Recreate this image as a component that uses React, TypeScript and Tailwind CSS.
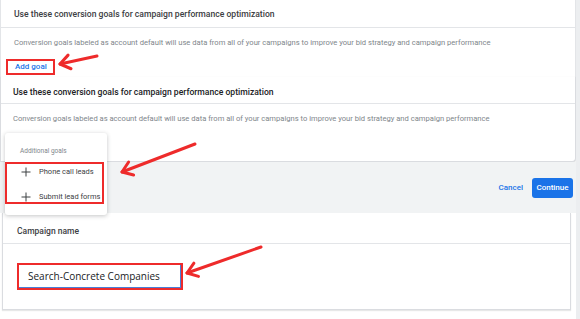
import React from 'react';

const TITLE = 'Use these conversion goals for campaign performance optimization';
const DESC =
  'Conversion goals labeled as account default will use data from all of your campaigns to improve your bid strategy and campaign performance';

function Arrow({ x1, y1, x2, y2 }: { x1: number; y1: number; x2: number; y2: number }) {
  // red annotation arrow, head at (x2, y2)
  const a = Math.atan2(y1 - y2, x1 - x2);
  const len = 12;
  const spread = 0.62;
  const h1x = x2 + len * Math.cos(a + spread);
  const h1y = y2 + len * Math.sin(a + spread);
  const h2x = x2 + len * Math.cos(a - spread);
  const h2y = y2 + len * Math.sin(a - spread);
  return (
    <g stroke="#ee2b2b" strokeWidth={3} strokeLinecap="round" strokeLinejoin="round" fill="none">
      <line x1={x1} y1={y1} x2={x2} y2={y2} />
      <polyline points={`${h1x},${h1y} ${x2},${y2} ${h2x},${h2y}`} />
    </g>
  );
}

function Plus() {
  return (
    <svg width="10" height="10" viewBox="0 0 10 10" className="shrink-0">
      <path d="M5 0.5v9M0.5 5h9" stroke="#3c4043" strokeWidth="1" />
    </svg>
  );
}

export default function App() {
  return (
    <div className="relative w-[580px] h-[319px] overflow-hidden bg-white flex font-['Roboto',sans-serif]">
      <div className="flex-1 flex flex-col min-w-0">
        {/* Goals panel 1 */}
        <section className="h-[77px] border-l border-r border-[#e3e5e8] bg-white shrink-0">
          <div className="h-[28px] flex items-end pb-[8px] pl-[13px] border-b border-[#e3e5e8]">
            <h2 className="text-[8.6px] font-medium text-[#3c4043] leading-[10px]">{TITLE}</h2>
          </div>
          <p className="pl-[13px] pt-[10px] text-[7.6px] text-[#80868b] leading-[10px]">{DESC}</p>
          <div className="mt-[11px] ml-[5px] w-[49px] h-[16px] border-2 border-[#ee2b2b] flex items-center pl-[7px]">
            <span className="text-[8px] font-medium text-[#1a73e8]">Add goal</span>
          </div>
        </section>

        {/* Goals panel 2 */}
        <section className="h-[85px] bg-white border-r border-b border-l border-[#dadce0] rounded-br-[4px] shadow-[0_1px_2px_rgba(60,64,67,0.2)] shrink-0">
          <div className="h-[27px] flex items-end pb-[6px] pl-[12px] border-b border-[#e3e5e8]">
            <h2 className="text-[8.6px] font-medium text-[#202124] leading-[10px]">{TITLE}</h2>
          </div>
          <p className="pl-[12px] pt-[10px] text-[7.6px] text-[#80868b] leading-[10px]">{DESC}</p>
        </section>

        {/* Actions */}
        <div className="h-[51px] bg-[#f1f3f4] flex items-center justify-end gap-[9px] pr-[3px] shrink-0">
          <button className="text-[8px] font-medium text-[#1a73e8]">Cancel</button>
          <button className="w-[41px] h-[20px] rounded-[3px] bg-[#1a73e8] text-[8px] font-medium text-white">
            Continue
          </button>
        </div>

        {/* Campaign name */}
        <div className="flex-1 flex flex-col bg-white">
          <section className="h-[97px] ml-[2px] mr-[5px] bg-white border border-t-0 border-[#dadce0] shadow-[0_1px_1px_rgba(60,64,67,0.12)]">
            <div className="h-[31px] flex items-end pb-[7px] pl-[14px] border-b border-[#e3e5e8]">
              <h3 className="text-[8.5px] font-medium text-[#3c4043] leading-[10px]">Campaign name</h3>
            </div>
            <div className="pt-[19px] pl-[14px]">
              <div className="w-[166px] h-[27px] border-2 border-[#ee2b2b] flex items-center pl-[9px] shadow-[inset_-1px_-1px_0_#4a7fd6]">
                <span className="text-[10px] text-[#202124] font-['Open_Sans',sans-serif]">Search-Concrete Companies</span>
              </div>
            </div>
          </section>
        </div>
      </div>
      <div className="w-[4px] bg-[#eceef0] shrink-0" />

      {/* Additional goals menu */}
      <div className="absolute left-[5px] top-[133px] w-[102px] h-[82px] bg-white rounded-[3px] shadow-[0_1px_4px_rgba(60,64,67,0.3)] flex flex-col">
        <div className="h-[29px] flex items-end pb-[5px] pl-[15px]">
          <span className="text-[6.5px] text-[#80868b]">Additional goals</span>
        </div>
        <div className="w-[99px] h-[42px] border-2 border-[#ee2b2b] flex flex-col gap-[15px] pt-[3px]">
          <div className="flex items-center gap-[8px] pl-[14px] h-[10px]">
            <Plus />
            <span className="text-[7.5px] text-[#3c4043]">Phone call leads</span>
          </div>
          <div className="flex items-center gap-[8px] pl-[14px] h-[10px]">
            <Plus />
            <span className="text-[7.5px] text-[#3c4043]">Submit lead forms</span>
          </div>
        </div>
      </div>

      {/* Annotation arrows */}
      <svg className="absolute inset-0 pointer-events-none" width="580" height="319">
        <Arrow x1={97} y1={56} x2={60} y2={64} />
        <Arrow x1={195} y1={144} x2={122} y2={172} />
        <Arrow x1={261} y1={247} x2={187} y2={273} />
      </svg>
    </div>
  );
}
